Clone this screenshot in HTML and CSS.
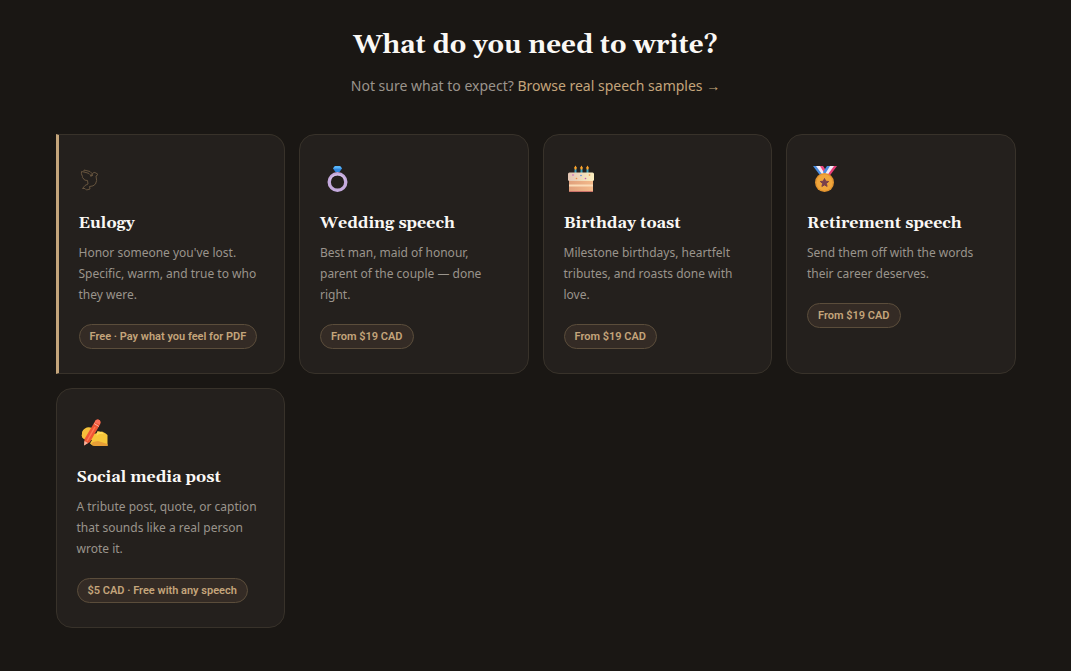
FILE: index.html
```html
<!DOCTYPE html>
<html lang="en">
<head>
<meta charset="utf-8">
<meta name="viewport" content="width=device-width, initial-scale=1">
<title>What do you need to write?</title>
<link rel="stylesheet" href="styles.css">
</head>
<body>
<main class="picker">
  <header class="intro">
    <h1 class="intro-title">What do you need to write?</h1>
    <p class="intro-note">Not sure what to expect? <a class="intro-link" href="#samples">Browse real speech samples →</a></p>
  </header>
  <div class="cards">
    <a class="card card-featured" href="#eulogy">
      <svg class="icon" viewBox="9 0 40 40" aria-hidden="true" fill="none" stroke="#66543e" stroke-width="1" stroke-linejoin="round">
        <path d="M11.5 12.5 16 13.5 19 14.500Q20.500 15.500 21 17.500L22.500 14.500Q24 12.500 26 14L28 15.500 26 17Q27.500 22 25.500 25Q23.500 27.500 19.500 27.500L20 30 16.500 31 15 29.500 12.500 29.500 15 26.500 18 25 17.500 21.500Q13.500 21.500 14 20Q11.500 18.500 12.500 17.500Q10.800 14.500 11.500 12.500ZM14 12.500 14 11 20 12.500Q22.500 14 22.500 17"/>
      </svg>
      <h2 class="card-title">Eulogy</h2>
      <p class="card-text">Honor someone you've lost. Specific, warm, and true to who they were.</p>
      <span class="badge">Free · Pay what you feel for PDF</span>
    </a>
    <a class="card" href="#wedding">
      <svg class="icon" viewBox="3 -1 40 40" aria-hidden="true">
        <circle cx="20.500" cy="22" r="8.300" fill="none" stroke="#c5aadd" stroke-width="3.400"/>
        <path d="M13 20A8 8 0 0 1 28 20" fill="none" stroke="#d9c5e8" stroke-width="1"/>
        <path d="M16 8.500 18 6H23L25 8.500 22.500 12H18.500Z" fill="#2f86df"/>
        <path d="M16 8.500 18 6H23L25 8.500Z" fill="#58b5fa"/>
      </svg>
      <h2 class="card-title">Wedding speech</h2>
      <p class="card-text">Best man, maid of honour, parent of the couple — done right.</p>
      <span class="badge">From $19 CAD</span>
    </a>
    <a class="card" href="#birthday">
      <svg class="icon" viewBox="3 -1 40 40" aria-hidden="true">
        <defs>
          <linearGradient id="icing"><stop offset="0" stop-color="#e3c5b4"/><stop offset="1" stop-color="#fbeebf"/></linearGradient>
          <linearGradient id="sponge"><stop offset="0" stop-color="#e0a07c"/><stop offset="1" stop-color="#f3b98a"/></linearGradient>
        </defs>
        <path d="M8 18H32V31Q32 32 31 32H9Q8 32 8 31Z" fill="url(#sponge)"/>
        <path d="M8 24.500H32V26.500H8Z" fill="#fbdcb8"/>
        <path d="M8 31H32Q32 32 31 32H9Q8 32 8 31Z" fill="#c9706a"/>
        <path d="M13.500 9H15.500V14H13.500ZM19.500 9H21.500V14H19.500ZM25.500 9H27.500V14H25.500Z" fill="#3f9fb8"/>
        <path d="M8.500 12.500H31.500Q33 12.500 33 14V19.500Q33 21 31.500 21H8.500Q7 21 7 19.500V14Q7 12.500 8.500 12.500Z" fill="url(#icing)"/>
        <path d="M14.500 5.500 16 8 14.500 10 13 8ZM20.500 5.500 22 8 20.500 10 19 8ZM26.500 5.500 28 8 26.500 10 25 8Z" fill="#ffa52c"/>
        <g fill="#c65abd"><circle cx="12" cy="15" r=".8"/><circle cx="24.500" cy="18.500" r=".8"/></g>
        <circle cx="20" cy="15.500" r=".8" fill="#568ce0"/>
        <g fill="#ed8c46"><circle cx="15.500" cy="18.500" r=".8"/><circle cx="28.500" cy="15" r=".8"/></g>
      </svg>
      <h2 class="card-title">Birthday toast</h2>
      <p class="card-text">Milestone birthdays, heartfelt tributes, and roasts done with love.</p>
      <span class="badge">From $19 CAD</span>
    </a>
    <a class="card" href="#retirement">
      <svg class="icon" viewBox="2 -1 40 40" aria-hidden="true">
        <path d="M8 6H12L21 16 17 18Z" fill="#4a8de0"/>
        <path d="M11 6H16L22 14 19 17Z" fill="#f4ecf8"/>
        <path d="M15 6H18L22 12 20.500 15Z" fill="#ed477f"/>
        <path d="M32 6H28L19 16 23 18Z" fill="#e63d77"/>
        <path d="M29 6H24L18.500 14 21 17Z" fill="#f4ecf8"/>
        <path d="M25 6H22L18 12 19.500 15Z" fill="#4a8de0"/>
        <circle cx="19.500" cy="22.500" r="9.500" fill="#e2932f"/>
        <circle cx="19.500" cy="22.500" r="8" fill="#f0a63c"/>
        <path d="m19.500 18.500 1.200 2.700 3 .3-2.300 2 .7 2.900-2.600-1.500-2.600 1.500.7-2.900-2.300-2 3-.3Z" fill="#79404b" stroke="#79404b"/>
      </svg>
      <h2 class="card-title">Retirement speech</h2>
      <p class="card-text">Send them off with the words their career deserves.</p>
      <span class="badge">From $19 CAD</span>
    </a>
    <a class="card" href="#social">
      <svg class="icon" viewBox="3 1 40 40" aria-hidden="true">
        <path d="M8 22Q8 18 11 16.500Q14 14.500 18 16L20 22 28 19.500Q32 21 33.500 23V34H22Q18 34 16 31.500L18 28 10 27Q7 25 8 22Z" fill="#f6c63a"/>
        <path d="M19 30 24 29 33.500 32V34H22Q19 34 17 32Z" fill="#e79e36"/>
        <path d="M23 19.500Q27 18.500 30 22Q25 21 22.500 24Z" fill="#ffda5b"/>
        <path d="M8 22Q8 18 12 17Q17 15 18 18Q18 20 14 21L17 22Q18 24 15 25L17 27Q15 29 11 27Q7 26 8 22Z" fill="#f6bd3b"/>
        <path d="M21.500 8.500Q23.500 6.500 26 8.500Q27 10 26 12.500L16 30 10 33.500 10.500 27Z" fill="#ef5634"/>
        <path d="M21.500 8.500Q23.500 6.500 26 8.500Q27 10 26 12.500L20.500 10.500Z" fill="#fa7059"/>
        <path d="M20 11.500 25 14.500" stroke="#f8b0a0" stroke-width="1"/>
        <path d="M10.500 29 10 33.500 14 31Z" fill="#f1b5a0"/>
        <path d="M21 15 13 29" stroke="#ff7951" stroke-width="1.500"/>
      </svg>
      <h2 class="card-title">Social media post</h2>
      <p class="card-text">A tribute post, quote, or caption that sounds like a real person wrote it.</p>
      <span class="badge">$5 CAD · Free with any speech</span>
    </a>
  </div>
</main>
</body>
</html>
```

FILE: styles.css
```css
* {
  box-sizing: border-box;
}

body {
  margin: 0;
  background: #1a1714;
  color: #faf8f5;
  font-family: "Noto Sans", "Open Sans", sans-serif;
}

.picker {
  max-width: 1008px;
  margin: 0 auto;
  padding: 26px 24px 44px;
}

.intro {
  margin-bottom: 36px;
  text-align: center;
}

.intro-title {
  margin: 0 0 8px;
  font-family: Gelasio, Georgia, "Liberation Serif", serif;
  font-size: 26px;
  font-weight: 700;
  line-height: 40px;
}

.intro-note {
  margin: 0;
  color: #9a948c;
  font-size: 14px;
  line-height: 24px;
}

.intro-link {
  color: #c4a57b;
  text-decoration: none;
}

.cards {
  display: grid;
  grid-template-columns: repeat(auto-fill, minmax(220px, 1fr));
  gap: 14px;
}

.card {
  display: flex;
  flex-direction: column;
  align-items: flex-start;
  padding: 24px 20px;
  border: 1px solid #38322a;
  border-radius: 16px;
  background: #24201d;
  color: inherit;
  text-decoration: none;
}

.card-featured {
  border-left: 3px solid #c4a57b;
  border-radius: 0 16px 16px 0;
}

.icon {
  width: 40px;
  height: 40px;
  margin-bottom: 13px;
}

.card-title {
  margin: 0 0 8px;
  font-family: Gelasio, Georgia, "Liberation Serif", serif;
  font-size: 16px;
  font-weight: 700;
  line-height: 22px;
}

.card-text {
  margin: 0 0 19px;
  color: #9a948c;
  font-size: 12px;
  line-height: 21px;
}

.badge {
  padding: 0 10px;
  border: 1px solid #5b4d3b;
  border-radius: 20px;
  background: #342b25;
  color: #c4a57b;
  font-family: Roboto, "Noto Sans", sans-serif;
  font-size: 11px;
  font-weight: 600;
  line-height: 23px;
  white-space: nowrap;
}
```
